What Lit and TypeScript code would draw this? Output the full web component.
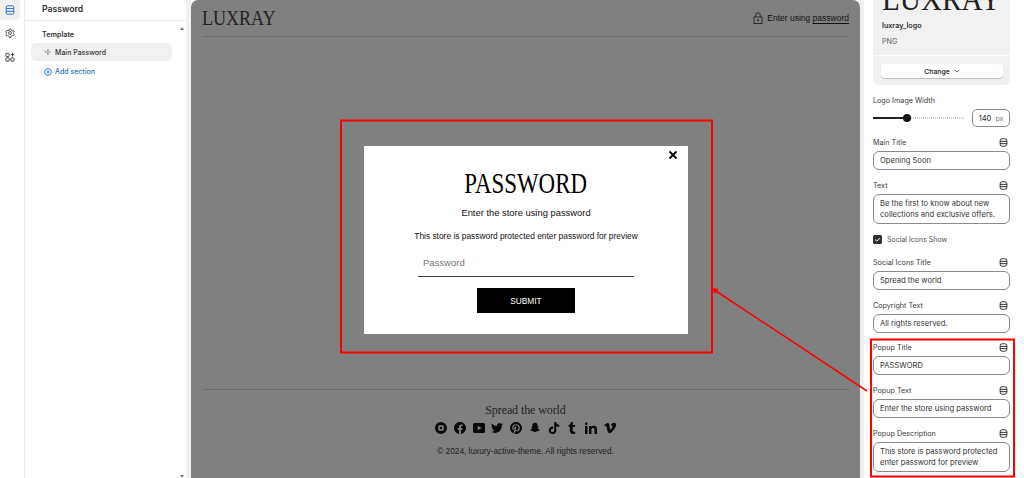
import { LitElement, html, css, svg } from "lit";
import { customElement } from "lit/decorators.js";

const dbIcon = html`<svg class="db" viewBox="0 0 12 12" fill="none" stroke="#303030" stroke-width="1.300"><rect x="1.500" y="1" width="9" height="10" rx="2.800"/><path d="M1.500 4.500h9M1.500 7.500h9"/></svg>`;

const socialPaths = [
  { fill: "M12 0a12 12 0 100 24 12 12 0 000-24zM9 6.500h6A2.500 2.500 0 0117.500 9v6a2.500 2.500 0 01-2.500 2.500H9A2.500 2.500 0 016.500 15V9A2.500 2.500 0 019 6.500zm3 3a2.500 2.500 0 100 5 2.500 2.500 0 000-5z" },
  { fill: "M24 12.073c0-6.627-5.373-12-12-12s-12 5.373-12 12c0 5.99 4.388 10.954 10.125 11.854v-8.385H7.078v-3.47h3.047V9.43c0-3.007 1.792-4.669 4.533-4.669 1.312 0 2.686.235 2.686.235v2.953H15.83c-1.491 0-1.956.925-1.956 1.874v2.25h3.328l-.532 3.47h-2.796v8.385C19.612 23.027 24 18.062 24 12.073z" },
  { fill: "M3 2h18a3 3 0 013 3v14a3 3 0 01-3 3H3a3 3 0 01-3-3V5a3 3 0 013-3zm6.500 5.500v9l7.500-4.500z" },
  { fill: "M23.953 4.57a10 10 0 01-2.825.775 4.958 4.958 0 002.163-2.723c-.951.555-2.005.959-3.127 1.184a4.92 4.92 0 00-8.384 4.482C7.69 8.095 4.067 6.13 1.64 3.162a4.822 4.822 0 00-.666 2.475c0 1.71.87 3.213 2.188 4.096a4.904 4.904 0 01-2.228-.616v.06a4.923 4.923 0 003.946 4.827 4.996 4.996 0 01-2.212.085 4.936 4.936 0 004.604 3.417 9.867 9.867 0 01-6.102 2.105c-.39 0-.779-.023-1.17-.067a13.995 13.995 0 007.557 2.209c9.053 0 13.998-7.496 13.998-13.985 0-.21 0-.42-.015-.63A9.935 9.935 0 0024 4.59z" },
  { fill: "M12 0C5.37 0 0 5.37 0 12c0 5.08 3.16 9.42 7.62 11.17-.1-.95-.2-2.41.04-3.45.22-.94 1.4-5.96 1.4-5.96s-.36-.72-.36-1.78c0-1.67.97-2.92 2.17-2.92 1.02 0 1.52.77 1.52 1.69 0 1.03-.66 2.57-1 4-.28 1.19.6 2.16 1.78 2.16 2.13 0 3.77-2.25 3.77-5.49 0-2.87-2.06-4.88-5-4.88-3.41 0-5.41 2.55-5.41 5.19 0 1.03.4 2.13.89 2.73.1.12.11.22.08.34l-.33 1.36c-.05.22-.18.27-.41.16-1.5-.7-2.43-2.89-2.43-4.65 0-3.78 2.75-7.26 7.92-7.26 4.16 0 7.4 2.97 7.4 6.93 0 4.14-2.61 7.46-6.23 7.46-1.22 0-2.36-.63-2.75-1.38l-.75 2.85c-.27 1.04-1 2.35-1.49 3.15 1.12.35 2.31.53 3.55.53 6.63 0 12-5.37 12-12S18.63 0 12 0z" },
  { fill: "M12 1.500c3.400 0 5.400 2.500 5.400 5.500v2.300c.6.300 1.500-.4 2 .3.400.6-.4 1.300-1.700 1.800-.3.100-.3.500-.1.900.8 1.600 2.200 3 4 3.400.5.100.6.600.1.900-.8.500-1.900.7-2.800.9-.3.600-.2 1.200-.9 1.200-1-.1-2-.2-3 .3-1 .6-1.800 1.500-3 1.500s-2-.9-3-1.500c-1-.5-2-.4-3-.3-.7 0-.6-.6-.9-1.200-.9-.2-2-.4-2.800-.9-.5-.3-.4-.8.1-.9 1.800-.4 3.200-1.800 4-3.400.2-.4.2-.8-.1-.9-1.300-.5-2.100-1.200-1.700-1.800.5-.7 1.400 0 2-.3V7c0-3 2-5.500 5.400-5.500z" },
  { big: true, fill: "M12.525.02c1.31-.02 2.61-.01 3.91-.02.08 1.53.63 3.09 1.75 4.17 1.12 1.11 2.7 1.62 4.24 1.79v4.03c-1.44-.05-2.89-.35-4.2-.97-.57-.26-1.1-.59-1.62-.93-.01 2.92.01 5.84-.02 8.75-.08 1.4-.54 2.79-1.35 3.94-1.31 1.92-3.58 3.17-5.91 3.21-1.43.08-2.86-.31-4.08-1.03-2.02-1.19-3.44-3.37-3.65-5.71-.02-.5-.03-1-.01-1.49.18-1.9 1.12-3.72 2.58-4.96 1.66-1.44 3.98-2.13 6.15-1.72.02 1.48-.04 2.96-.04 4.44-.99-.32-2.15-.23-3.02.37-.63.41-1.11 1.04-1.36 1.75-.21.51-.15 1.07-.14 1.61.24 1.64 1.82 3.02 3.5 2.87 1.12-.01 2.19-.66 2.77-1.61.19-.33.4-.67.41-1.06.1-1.79.06-3.57.07-5.36.01-4.03-.01-8.05.02-12.07z" },
  { fill: "M14.563 24c-5.093 0-7.031-3.756-7.031-6.411V9.747H5.116V6.648c3.63-1.313 4.512-4.596 4.71-6.469C9.84.051 9.941 0 9.999 0h3.517v6.114h4.801v3.633h-4.82v7.47c.016 1.001.375 2.371 2.207 2.371h.09c.631-.02 1.486-.205 1.936-.419l1.156 3.425c-.436.636-2.4 1.374-4.156 1.404h-.178l.011.002z" },
  { fill: "M4.98 3.5C4.98 4.88 3.87 6 2.5 6S.02 4.88.02 3.5 1.13 1 2.5 1s2.48 1.12 2.48 2.5zM5 8H0v16h5V8zm7.98 0H8.01v16h4.97v-8.4c0-4.67 6.02-5.05 6.02 0V24H24V13.87c0-7.88-8.92-7.59-11.05-3.71V8z" },
  { fill: "M23.977 6.416c-.105 2.338-1.739 5.543-4.894 9.609-3.268 4.247-6.026 6.37-8.29 6.37-1.409 0-2.578-1.294-3.553-3.881L5.322 11.4C4.603 8.816 3.834 7.522 3.01 7.522c-.179 0-.806.378-1.881 1.132L0 7.197c1.185-1.044 2.351-2.084 3.501-3.128C5.08 2.701 6.266 1.984 7.055 1.91c1.867-.18 3.016 1.1 3.447 3.838.465 2.953.789 4.789.971 5.507.539 2.45 1.131 3.674 1.776 3.674.502 0 1.256-.796 2.265-2.385 1.004-1.589 1.54-2.797 1.612-3.628.144-1.371-.395-2.061-1.614-2.061-.574 0-1.167.121-1.777.391 1.186-3.868 3.434-5.757 6.762-5.637 2.473.06 3.628 1.664 3.493 4.797l-.013.01z" },
];

@customElement("app-root")
export class AppRoot extends LitElement {
  static styles = css`
    :host { display: block; position: relative; width: 1024px; height: 478px; overflow: hidden; background: #fff; font-family: Inter, "Liberation Sans", sans-serif; color: #303030; }
    .layout { display: flex; height: 478px; }

    .rail { flex: none; width: 24px; border-right: 1px solid #ebebeb; display: flex; flex-direction: column; align-items: flex-start; gap: 3px; }
    .rail-btn { width: 20px; height: 20px; display: flex; align-items: center; justify-content: center; border-radius: 0 0 5px 0; }
    .rail-btn.active { background: #f1f1f1; }
    .rail-btn svg { width: 10px; height: 10px; }
    .rail-btn.last { margin-top: 1px; }

    .nav { flex: none; width: 161px; display: flex; flex-direction: column; position: relative; }
    .nav-title { height: 21px; box-sizing: border-box; padding: 3px 0 0 17px; font-size: 8.700px; line-height: 13px; font-weight: 600; border-bottom: 1px solid #ebebeb; color: #303030; }
    .nav-group { padding: 9px 0 0 17px; font-size: 7.200px; line-height: 10px; font-weight: 600; }
    .nav-item { margin: 3px 0 0 6px; width: 141px; height: 18px; border-radius: 5px; background: #f1f1f1; display: flex; align-items: center; gap: 4px; padding-left: 13px; box-sizing: border-box; font-size: 7px; font-weight: 500; }
    .nav-item svg { width: 7px; height: 8px; }
    .nav-add { margin: 6px 0 0 19px; display: flex; align-items: center; gap: 3px; font-size: 7px; line-height: 10px; color: #2c6ecb; font-weight: 500; }
    .nav-add svg { width: 8px; height: 8px; }
    .scroll-up, .scroll-down { position: absolute; left: 155px; width: 0; height: 0; border-left: 2.500px solid transparent; border-right: 2.500px solid transparent; }
    .scroll-up { top: 27px; border-bottom: 3px solid #777; }
    .scroll-down { bottom: 0; border-top: 3px solid #777; }

    .gutter { flex: none; width: 5px; background: #f1f1f1; }
    .preview { flex: none; width: 669px; box-sizing: border-box; background: #808080; border-radius: 7px 7px 0 0; padding: 0 11px; display: flex; flex-direction: column; }
    .pv-head { flex: none; height: 37px; box-sizing: border-box; border-bottom: 1px solid #6d6d6d; display: flex; align-items: center; justify-content: space-between; }
    .logo { font-family: "Liberation Serif", serif; font-size: 22px; line-height: 18px; color: #222; margin-top: -1px; transform: scaleX(.82); transform-origin: left center; }
    .enter { display: flex; align-items: center; gap: 4px; font-family: "Liberation Sans", sans-serif; font-size: 8.500px; color: #111; }
    .enter svg { width: 10px; height: 12px; }
    .enter u { text-underline-offset: 2px; }
    .pv-main { flex: 1; }
    .pv-foot { flex: none; height: 89px; box-sizing: border-box; border-top: 1px solid #6d6d6d; display: flex; flex-direction: column; align-items: center; padding-top: 13px; }
    .spread { font-family: "Liberation Serif", serif; font-size: 12px; line-height: 14px; letter-spacing: -.1px; color: #222; }
    .social { display: flex; gap: 6.800px; margin-top: 5px; height: 12px; align-items: center; }
    .social svg { width: 12px; height: 12px; fill: #0a0a0a; }
    .social svg.big { height: 14px; }
    .copy { font-family: "Liberation Sans", sans-serif; font-size: 8.300px; line-height: 12px; margin-top: 11px; color: #1c1c1c; }

    .modal-wrap { position: absolute; left: 364px; top: 146px; }
    .modal { position: relative; width: 324px; height: 188px; background: #fff; display: flex; flex-direction: column; align-items: center; font-family: "Liberation Sans", sans-serif; color: #111; }
    .close { position: absolute; right: 10px; top: 4px; width: 10px; height: 10px; }
    .m-title { font-family: "Liberation Serif", serif; font-size: 29px; line-height: 32px; margin-top: 21px; color: #000; transform: scaleX(.79); }
    .m-text { font-size: 9.400px; line-height: 12px; margin-top: 8px; }
    .m-desc { font-size: 8.400px; line-height: 12px; margin-top: 11px; }
    .m-input { width: 216px; height: 25px; box-sizing: border-box; margin-top: 10px; border-bottom: 1px solid #444; padding: 0 5px; font-size: 9.500px; line-height: 22px; color: #777; }
    .m-btn { width: 98px; height: 25px; margin-top: 11px; background: #000; color: #fff; display: flex; align-items: center; justify-content: center; font-size: 8.300px; }

    .gutter2 { flex: none; width: 4px; background: #f1f1f1; }
    .panel { flex: none; width: 137px; margin-left: 9px; display: flex; flex-direction: column; }
    .card { height: 85px; background: #f1f1f1; border-radius: 0 0 6px 6px; overflow: hidden; display: flex; flex-direction: column; }
    .card-top { height: 56px; box-sizing: border-box; border-bottom: 1px solid #fff; padding: 0 9px; overflow: hidden; }
    .card-logo { font-family: "Liberation Serif", serif; font-size: 34px; line-height: 32px; margin-top: -17px; color: #222; white-space: nowrap; transform: scaleX(.86); transform-origin: left center; }
    .card-name { font-size: 7.200px; font-weight: 600; line-height: 10px; margin-top: 6px; }
    .card-type { font-size: 7.200px; line-height: 10px; margin-top: 6px; color: #616161; }
    .change { margin: 8px 7px 0 8px; height: 14px; border-radius: 4px; background: #fff; box-shadow: 0 1px 1px #bbb; display: flex; align-items: center; justify-content: center; gap: 4px; font-size: 6.800px; font-weight: 600; }
    .change svg { width: 6px; height: 6px; }
    .lbl { display: flex; justify-content: space-between; align-items: center; height: 12px; font-size: 7.200px; line-height: 12px; color: #3a3a3a; padding-right: 2px; }
    .db { width: 9px; height: 9px; margin-top: -2px; }
    .slider-row { display: flex; align-items: center; margin-top: 2px; height: 18px; }
    .track { position: relative; width: 91px; height: 2px; background: repeating-linear-gradient(90deg, #cfcfcf 0 1px, transparent 1px 2px); }
    .track i { position: absolute; left: 0; top: 0; width: 34px; height: 2px; background: #222; }
    .track b { position: absolute; left: 30px; top: -3px; width: 8px; height: 8px; border-radius: 50%; background: #111; }
    .num { margin-left: 8px; width: 38px; height: 18px; box-sizing: border-box; border: 1px solid #8a8a8a; border-radius: 5px; display: flex; align-items: center; justify-content: center; gap: 4px; font-size: 7.600px; }
    .num span { color: #777; font-size: 7px; }
    .field { margin-top: 10px; }
    .box { margin-top: 2px; box-sizing: border-box; border: 1px solid #8a8a8a; border-radius: 6px; background: #fff; padding: 0 6px; font-size: 7.600px; line-height: 11px; min-height: 19px; display: flex; align-items: center; color: #333; }
    .box.area { padding: 3px 6px; height: 30px; }
    .check { display: flex; align-items: center; gap: 5px; margin-top: 11px; height: 9px; font-size: 7px; color: #555; }
    .check svg { width: 9px; height: 9px; }
    .field.after-check { margin-top: 13px; }
    .field.popup-first { margin-top: 9px; }
    .field.popup { margin-top: 10px; }
    .annot { position: absolute; inset: 0; width: 1024px; height: 478px; pointer-events: none; }
  `;

  field(label: string, value: string, cls = "", area = false) {
    return html`<div class="field ${cls}">
      <div class="lbl"><span>${label}</span>${dbIcon}</div>
      <div class="box ${area ? "area" : ""}">${value}</div>
    </div>`;
  }

  render() {
    return html`
      <div class="layout">
        <div class="rail">
          <div class="rail-btn active"><svg viewBox="0 0 12 12" fill="none" stroke="#2c6ecb" stroke-width="1.200"><rect x="1.500" y="1" width="9" height="10" rx="1.500"/><path d="M1.500 4.300h9M1.500 7.600h9"/></svg></div>
          <div class="rail-btn"><svg viewBox="0 0 24 24" fill="none" stroke="#444" stroke-width="2.200"><circle cx="12" cy="12" r="3.500"/><path d="M10 2.500h4l.7 3 2.700 1.500 3-.9 2 3.500-2.200 2.200v1.400l2.200 2.200-2 3.500-3-.9-2.700 1.500-.7 3h-4l-.7-3-2.700-1.500-3 .9-2-3.500 2.200-2.200v-1.400L2.300 9.100l2-3.500 3 .9L10 5z"/></svg></div>
          <div class="rail-btn last"><svg viewBox="0 0 12 12" fill="none" stroke="#444" stroke-width="1.200"><rect x="1" y="1.500" width="4" height="4" rx="1"/><rect x="1" y="7" width="4" height="4" rx="1"/><rect x="7" y="7" width="4" height="4" rx="1"/><path d="M9 1v4.500M6.800 3.200h4.500"/></svg></div>
        </div>
        <div class="nav">
          <div class="nav-title">Password</div>
          <div class="nav-group">Template</div>
          <div class="nav-item"><svg viewBox="0 0 8 9" fill="none" stroke="#555" stroke-width=".9"><path d="M1 3l1.500 2.500M4.500 1v7M6 4.500h1.500"/></svg>Main Password</div>
          <div class="nav-add"><svg viewBox="0 0 10 10" fill="none" stroke="#2c6ecb" stroke-width="1.100"><circle cx="5" cy="5" r="4.200"/><path d="M5 2.800v4.400M2.800 5h4.400"/></svg>Add section</div>
          <div class="scroll-up"></div>
          <div class="scroll-down"></div>
        </div>
        <div class="gutter"></div>
        <div class="preview">
          <div class="pv-head">
            <div class="logo">LUXRAY</div>
            <div class="enter">
              <svg viewBox="0 0 10 12" fill="none" stroke="#222" stroke-width=".9"><rect x="1" y="5" width="8" height="6.500"/><path d="M2.800 5V3a2.200 2.200 0 014.400 0v2"/><circle cx="5" cy="8.200" r=".7" fill="#222"/></svg>
              <span>Enter using <u>password</u></span>
            </div>
          </div>
          <div class="pv-main"></div>
          <div class="pv-foot">
            <div class="spread">Spread the world</div>
            <div class="social">${socialPaths.map((p) => html`<svg class=${p.big ? "big" : ""} viewBox="0 0 24 24"><path fill-rule="evenodd" d="${p.fill}"/></svg>`)}</div>
            <div class="copy">© 2024, luxury-active-theme. All rights reserved.</div>
          </div>
        </div>
        <div class="gutter2"></div>
        <div class="panel">
          <div class="card">
            <div class="card-top">
              <div class="card-logo">LUXRAY</div>
              <div class="card-name">luxray_logo</div>
              <div class="card-type">PNG</div>
            </div>
            <div class="change">Change <svg viewBox="0 0 8 8" fill="none" stroke="#303030" stroke-width="1"><path d="M1 2.500l3 3 3-3"/></svg></div>
          </div>
          <div class="field">
            <div class="lbl"><span>Logo Image Width</span></div>
            <div class="slider-row"><div class="track"><i></i><b></b></div><div class="num">140 <span>px</span></div></div>
          </div>
          ${this.field("Main Title", "Opening Soon")}
          ${this.field("Text", "Be the first to know about new collections and exclusive offers.", "", true)}
          <div class="check"><svg viewBox="0 0 9 9"><rect width="9" height="9" rx="1.500" fill="#303030"/><path d="M2.200 4.600l1.600 1.600 3-3.200" fill="none" stroke="#fff" stroke-width="1"/></svg>Social Icons Show</div>
          ${this.field("Social Icons Title", "Spread the world", "after-check")}
          ${this.field("Copyright Text", "All rights reserved.")}
          ${this.field("Popup Title", "PASSWORD", "popup-first")}
          ${this.field("Popup Text", "Enter the store using password", "popup")}
          ${this.field("Popup Description", "This store is password protected enter password for preview", "popup", true)}
        </div>
      </div>
      <div class="modal-wrap">
        <div class="modal">
          <svg class="close" viewBox="0 0 10 10" stroke="#000" stroke-width="1.800" fill="none"><path d="M1.500 1.500l7 7M8.500 1.500l-7 7"/></svg>
          <div class="m-title">PASSWORD</div>
          <div class="m-text">Enter the store using password</div>
          <div class="m-desc">This store is password protected enter password for preview</div>
          <div class="m-input">Password</div>
          <div class="m-btn">SUBMIT</div>
        </div>
      </div>
      <svg class="annot" viewBox="0 0 1024 478" fill="none" stroke="#f00" stroke-width="2">
        ${svg`<rect x="341" y="120.500" width="371" height="232"/>
        <rect x="871" y="339.500" width="143" height="137"/>
        <path d="M867 391L716 291" stroke-width="1.500"/>
        <path d="M711 288l7.500 .8-3.400 5.200z" fill="#f00" stroke="none"/>`}
      </svg>
    `;
  }
}
